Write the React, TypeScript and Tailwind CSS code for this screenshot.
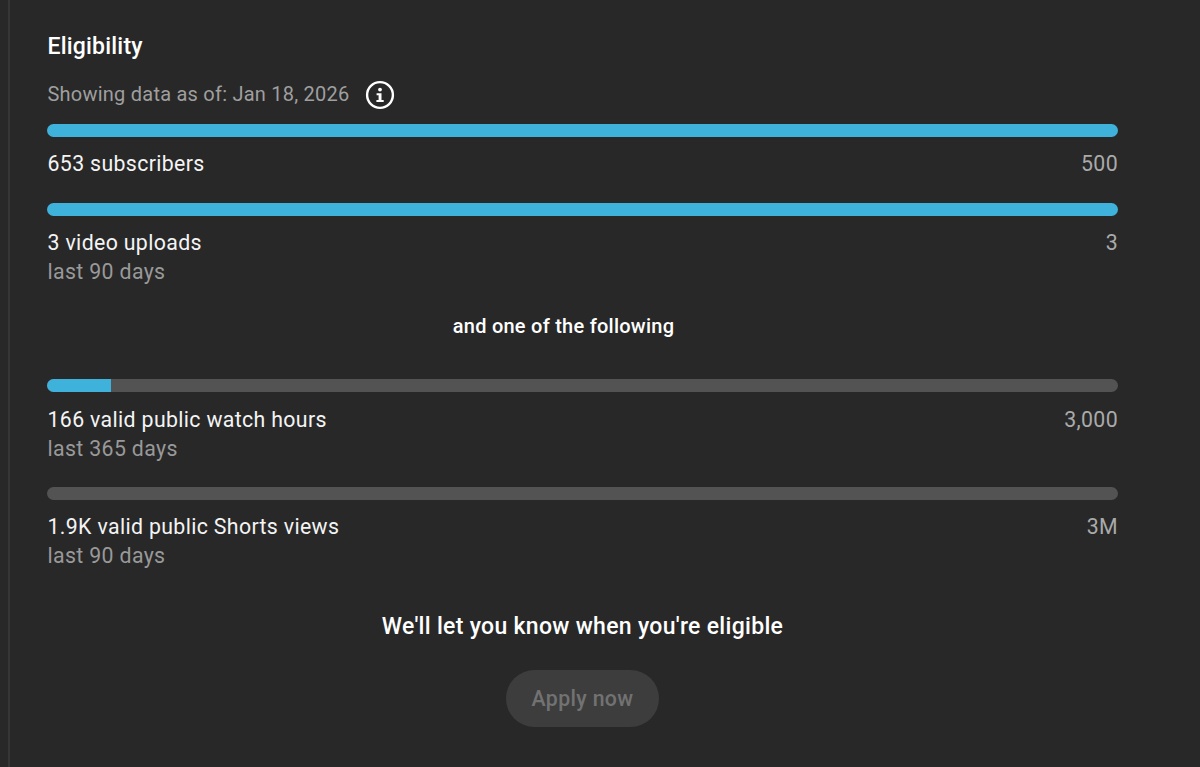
import React from 'react';

interface Metric {
  label: string;
  goal: string;
  note?: string;
  percent: number;
}

const topMetrics: Metric[] = [
  { label: '653 subscribers', goal: '500', percent: 100 },
  { label: '3 video uploads', goal: '3', note: 'last 90 days', percent: 100 },
];

const otherMetrics: Metric[] = [
  { label: '166 valid public watch hours', goal: '3,000', note: 'last 365 days', percent: 6 },
  { label: '1.9K valid public Shorts views', goal: '3M', note: 'last 90 days', percent: 0 },
];

const InfoIcon = () => (
  <svg width="30" height="30" viewBox="0 0 30 30" fill="none">
    <circle cx="15" cy="15" r="12.9" stroke="white" strokeWidth="2.4" />
    <circle cx="15" cy="9.6" r="1.9" fill="white" />
    <path d="M11.6 13.2h4.9v6.7h2.2v2.1h-7.3v-2.1h2.2v-4.6h-2z" fill="white" />
  </svg>
);

const MetricRow = ({ metric, lower }: { metric: Metric; lower?: boolean }) => (
  <div>
    <div className="h-[13px] rounded-full bg-[#535353] overflow-hidden">
      <div className="h-full bg-[#3eb2db]" style={{ width: `${metric.percent}%` }} />
    </div>
    <div className={`flex justify-between pl-[0.5px] ${lower ? 'mt-[12.5px]' : 'mt-[12px]'} h-[30px] items-center text-[21.3px] tracking-[0.35px] leading-[30px]`}>
      <span className="text-[#f4f4f4]">{metric.label}</span>
      <span className="text-[#aaaaaa]">{metric.goal}</span>
    </div>
    {metric.note && <p className="pl-[0.5px] text-[21.3px] tracking-[0.35px] leading-[27px] h-[27px] text-[#999999]">{metric.note}</p>}
  </div>
);

export default function App() {
  return (
    <div className="h-[767px] w-[1200px] overflow-hidden bg-[#282828] font-['Roboto',sans-serif] flex">
      <div className="ml-2 w-[2px] bg-[#363636]" />
      <div className="ml-[37px] w-[1071px] pt-[31px]">
        <h2 className="pl-[0.5px] text-[23px] tracking-[0.2px] leading-[32px] font-medium text-white">Eligibility</h2>

        <div className="flex items-center pl-[0.5px] h-[32px] mt-[15px] text-[#9f9f9f] text-[20px] tracking-[0.23px]">
          <span>Showing data as of: Jan 18, 2026</span>
          <span className="ml-[16px] mt-[2px]"><InfoIcon /></span>
        </div>

        <div className="mt-[14px] flex flex-col gap-[24px]">
          {topMetrics.map((m) => <MetricRow key={m.label} metric={m} />)}
        </div>

        <p className="mt-[26px] h-[30px] leading-[30px] text-center text-[20px] tracking-[0.25px] font-medium text-white pr-[38px]">and one of the following</p>

        <div className="mt-[38px] flex flex-col gap-[25px]">
          {otherMetrics.map((m) => <MetricRow key={m.label} metric={m} lower />)}
        </div>

        <p className="mt-[42px] h-[32px] leading-[32px] text-center text-[23px] tracking-[0.3px] font-medium text-white">We'll let you know when you're eligible</p>

        <div className="flex justify-center mt-[27px]">
          <button className="w-[153px] h-[57px] rounded-full bg-[#3d3d3d] text-[#727272] text-[21.3px] tracking-[0.35px] font-medium">Apply now</button>
        </div>
      </div>
    </div>
  );
}
